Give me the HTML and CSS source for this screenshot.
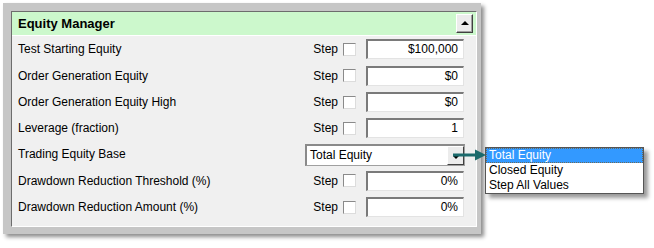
FILE: index.html
```html
<!DOCTYPE html>
<html>
<head>
<meta charset="utf-8">
<link rel="stylesheet" href="styles.css">
</head>
<body>
<div class="page">
  <div class="frame">
    <div class="panel">
      <div class="header">
        <span class="title">Equity Manager</span>
        <span class="scroll-btn"><span class="tri-up"></span></span>
      </div>
      <div class="rows">
        <div class="row">
          <span class="label">Test Starting Equity</span>
          <span class="step">Step</span><span class="check"></span>
          <span class="input">$100,000</span>
        </div>
        <div class="row">
          <span class="label">Order Generation Equity</span>
          <span class="step">Step</span><span class="check"></span>
          <span class="input">$0</span>
        </div>
        <div class="row">
          <span class="label">Order Generation Equity High</span>
          <span class="step">Step</span><span class="check"></span>
          <span class="input">$0</span>
        </div>
        <div class="row">
          <span class="label">Leverage (fraction)</span>
          <span class="step">Step</span><span class="check"></span>
          <span class="input">1</span>
        </div>
        <div class="row">
          <span class="label">Trading Equity Base</span>
          <span class="combo"><span class="combo-text">Total Equity</span><span class="combo-btn"><span class="tri-down"></span></span></span>
        </div>
        <div class="row">
          <span class="label">Drawdown Reduction Threshold (%)</span>
          <span class="step">Step</span><span class="check"></span>
          <span class="input">0%</span>
        </div>
        <div class="row">
          <span class="label">Drawdown Reduction Amount (%)</span>
          <span class="step">Step</span><span class="check"></span>
          <span class="input">0%</span>
        </div>
      </div>
    </div>
  </div>
  <svg class="arrow" width="34" height="14" viewBox="0 0 34 14">
    <line x1="0" y1="7" x2="24" y2="7" stroke="#1b6a6c" stroke-width="3"/>
    <polygon points="22,1.5 33,7 22,12.5" fill="#1b6a6c"/>
  </svg>
  <div class="list">
    <div class="item sel">Total Equity</div>
    <div class="item">Closed Equity</div>
    <div class="item">Step All Values</div>
  </div>
</div>
</body>
</html>
```
FILE: styles.css
```css
html, body {
  margin: 0;
  padding: 0;
  background: #ffffff;
}
body {
  font-family: "Liberation Sans", Arial, sans-serif;
  font-size: 12px;
  color: #000;
  width: 654px;
  height: 248px;
  overflow: hidden;
}
.page {
  position: relative;
  padding: 3px 0 0 3px;
}
.frame {
  width: 466px;
  background: #c6c6c6;
  padding: 8px 4px 7px 8px;
  box-shadow: 3px 3px 4px rgba(0,0,0,0.45);
}
.panel {
  background: #f0f0f0;
  border-top: 1px solid #6d6d6d;
  border-left: 1px solid #6d6d6d;
  border-right: 1px solid #ffffff;
  border-bottom: 1px solid #ffffff;
  padding-bottom: 6px;
}
.header {
  height: 23px;
  background: #ccf8cc;
  border-bottom: 1px solid #ffffff;
  display: flex;
  align-items: center;
  justify-content: space-between;
  padding: 0 3px 0 6px;
}
.title {
  font-weight: bold;
  font-size: 13px;
}
.scroll-btn {
  width: 15px;
  height: 17px;
  background: #ececec;
  border-top: 1px solid #ffffff;
  border-left: 1px solid #ffffff;
  border-right: 1px solid #404040;
  border-bottom: 1px solid #404040;
  box-shadow: inset -1px -1px 0 #a0a0a0;
  display: flex;
  align-items: center;
  justify-content: center;
}
.tri-up {
  width: 0;
  height: 0;
  border-left: 4px solid transparent;
  border-right: 4px solid transparent;
  border-bottom: 4px solid #000;
  margin-bottom: 1px;
}
.rows {
  display: grid;
  grid-template-rows: 26px 27px 26px 26px 26px 27px 26px;
}
.row {
  display: flex;
  align-items: center;
  padding: 0 12px 0 6px;
}
.label {
  flex: 1;
}
.step {
  margin-right: 5px;
}
.check {
  width: 11px;
  height: 11px;
  background: #ffffff;
  border-top: 1px solid #8a8a8a;
  border-left: 1px solid #8a8a8a;
  border-right: 1px solid #dcdcdc;
  border-bottom: 1px solid #dcdcdc;
  margin-right: 10px;
}
.input {
  width: 90px;
  height: 17px;
  line-height: 17px;
  background: #ffffff;
  border-top: 2px solid #7a7a7a;
  border-left: 2px solid #7a7a7a;
  border-right: 1px solid #e3e3e3;
  border-bottom: 1px solid #e3e3e3;
  text-align: right;
  padding-right: 5px;
}
.combo {
  width: 157px;
  height: 19px;
  background: #ffffff;
  border: 1px solid #a0a0a0;
  border-top: 2px solid #8a8a8a;
  border-left: 2px solid #8a8a8a;
  display: flex;
  align-items: center;
  margin-right: -1px;
  margin-top: 1px;
}
.combo-text {
  flex: 1;
  padding-left: 3px;
}
.combo-btn {
  width: 17px;
  height: 19px;
  box-sizing: border-box;
  background: #ececec;
  border-top: 1px solid #ffffff;
  border-left: 1px solid #ffffff;
  border-right: 1px solid #404040;
  border-bottom: 1px solid #404040;
  display: flex;
  align-items: flex-end;
  justify-content: center;
  padding-bottom: 5px;
}
.tri-down {
  width: 0;
  height: 0;
  border-left: 3px solid transparent;
  border-right: 3px solid transparent;
  border-top: 3px solid #000;
}
.arrow {
  position: absolute;
  left: 453px;
  top: 148px;
}
.list {
  position: absolute;
  left: 485px;
  top: 147px;
  width: 157px;
  background: #ffffff;
  border: 1px solid #555555;
  box-shadow: 4px 4px 4px rgba(0,0,0,0.4);
}
.item {
  height: 15px;
  line-height: 15px;
  padding-left: 3px;
}
.item.sel {
  background: #3399ff;
  color: #ffffff;
  outline: 1px dotted #6a6a5a;
  outline-offset: -1px;
}
```
